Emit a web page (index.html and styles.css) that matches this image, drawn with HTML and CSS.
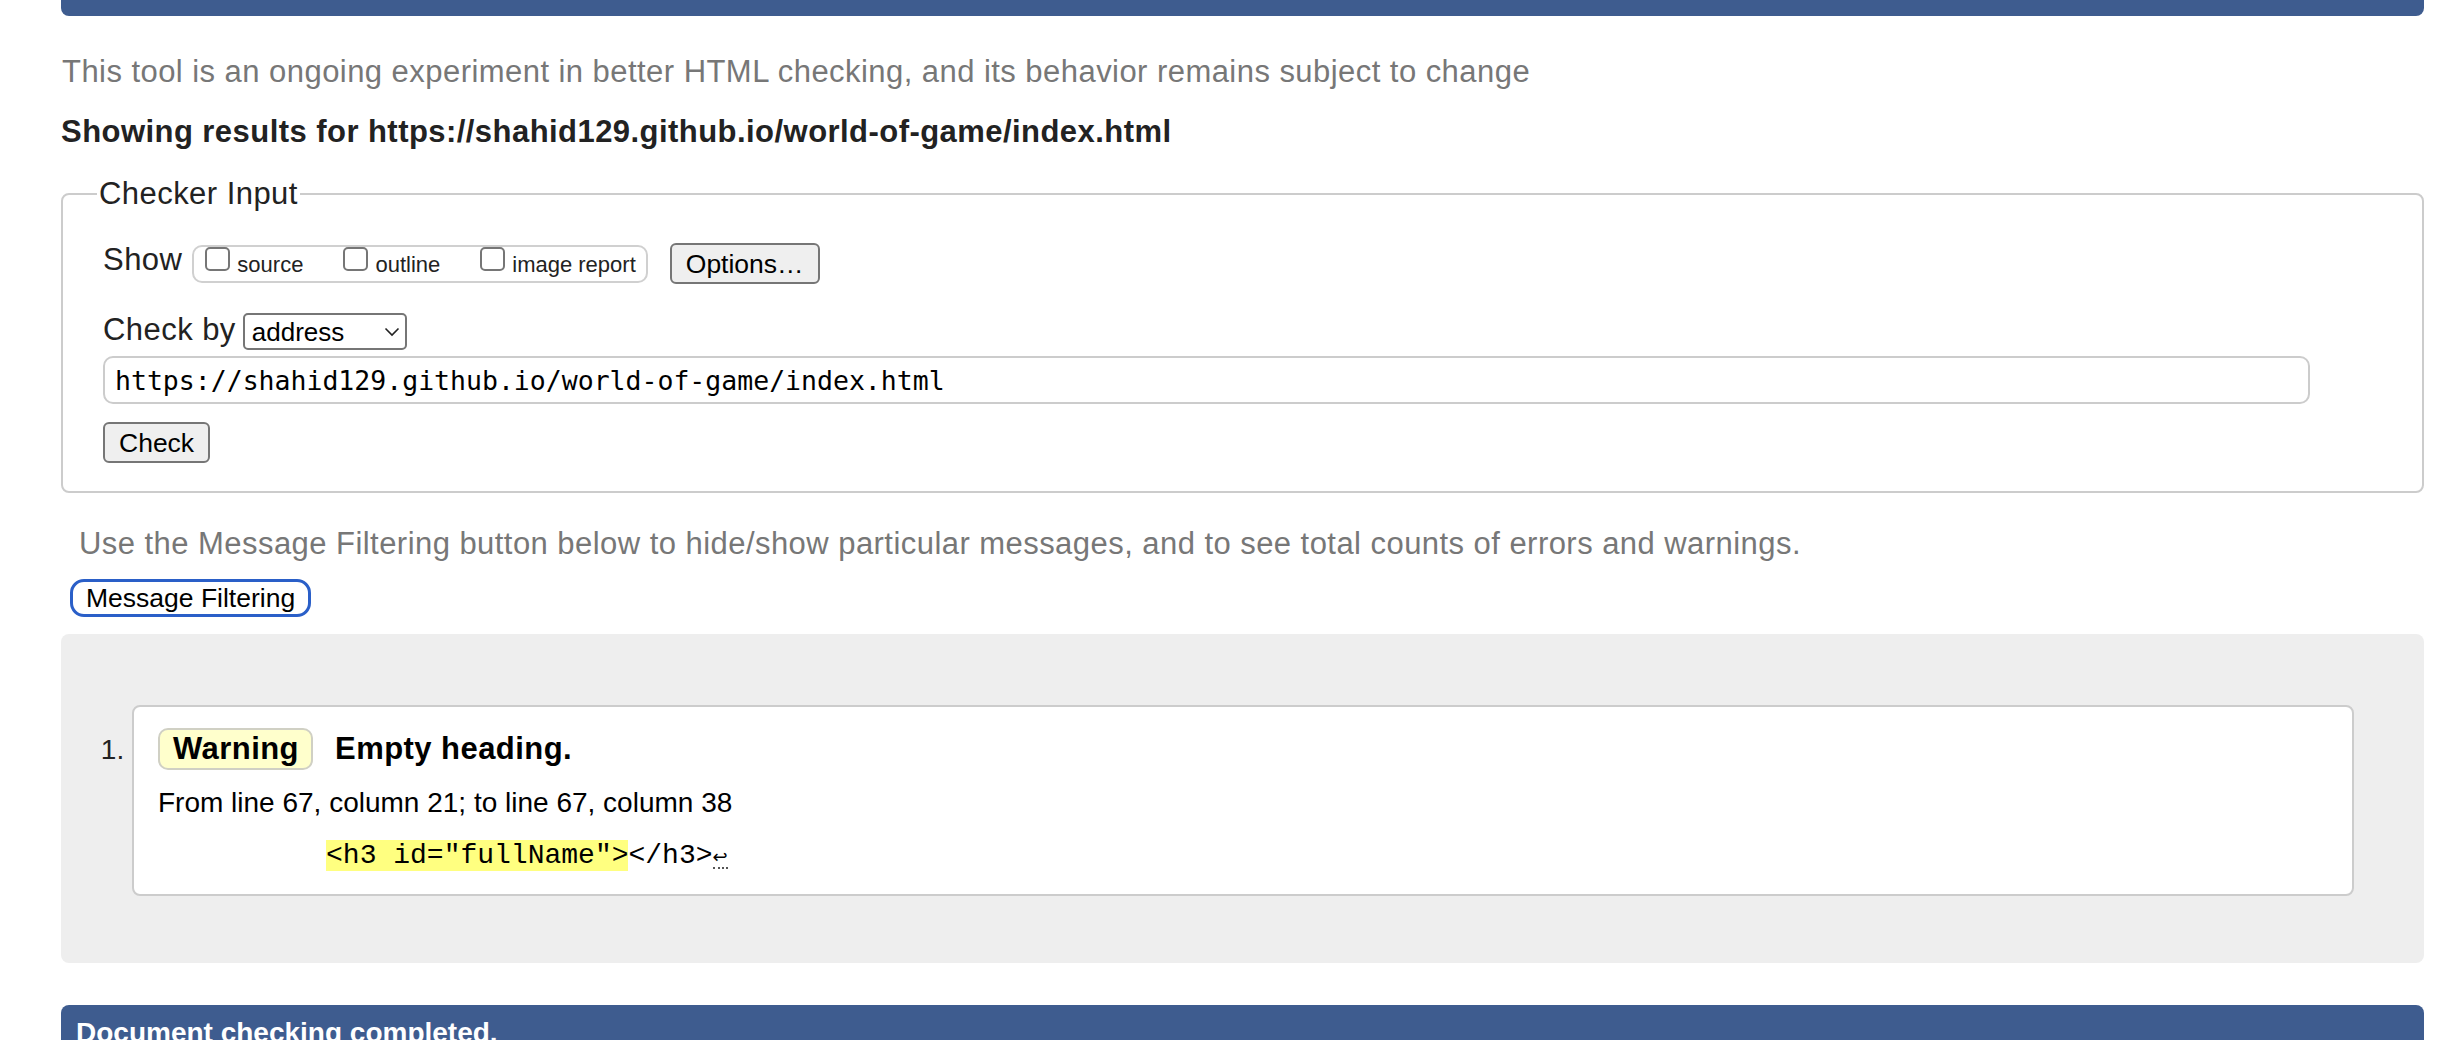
FILE: index.html
```html
<!DOCTYPE html>
<html lang="en">
<head>
<meta charset="utf-8">
<title>Nu Html Checker</title>
<link rel="stylesheet" href="styles.css">
</head>
<body>
<div class="page">
  <div class="topbar"></div>
  <p class="intro">This tool is an ongoing experiment in better HTML checking, and its behavior remains subject to change</p>
  <h2 class="results-for">Showing results for https://shahid129.github.io/world-of-game/index.html</h2>
  <form class="checker">
    <fieldset class="checker-input">
      <legend>Checker Input</legend>
      <div class="row row-show">
        <span class="label">Show</span>
        <span class="show-group">
          <label class="opt"><input type="checkbox"><span>source</span></label>
          <label class="opt"><input type="checkbox"><span>outline</span></label>
          <label class="opt"><input type="checkbox"><span>image report</span></label>
        </span>
        <button type="button" class="btn btn-options">Options…</button>
      </div>
      <div class="row row-by">
        <span class="label">Check by</span>
        <span class="select-wrap">
          <select class="select"><option>address</option></select>
          <svg class="chevron" width="16" height="10" viewBox="0 0 16 10"><path d="M1.5 1.5 L8 8 L14.5 1.5" fill="none" stroke="#222" stroke-width="1.6"/></svg>
        </span>
      </div>
      <input class="url" type="url" value="https://shahid129.github.io/world-of-game/index.html">
      <div class="row row-check"><button type="button" class="btn">Check</button></div>
    </fieldset>
  </form>
  <p class="filter-hint">Use the Message Filtering button below to hide/show particular messages, and to see total counts of errors and warnings.</p>
  <button type="button" class="filter-btn">Message Filtering</button>
  <div class="results">
    <ol class="messages">
      <li class="msg">
        <p class="msg-head"><span class="badge">Warning</span><span class="msg-text">Empty heading.</span></p>
        <p class="location">From line 67, column 21; to line 67, column 38</p>
        <p class="extract"><code>          <mark>&lt;h3 id="fullName"&gt;</mark>&lt;/h3&gt;<span class="lf">↩</span></code></p>
      </li>
    </ol>
  </div>
  <div class="footbar">Document checking completed.</div>
</div>
</body>
</html>
```
FILE: styles.css
```css
* { box-sizing: border-box; }
html, body { margin: 0; padding: 0; background: #fff; }
body {
  font-family: "Liberation Sans", Arial, sans-serif;
  color: #222;
  overflow: hidden;
  height: 1040px;
}
.page { margin: 0 24px 0 61px; }

.topbar {
  height: 16px;
  background: #3e5c8f;
  border-radius: 0 0 8px 8px;
}

.intro {
  margin: 39px 0 0 1px;
  font-size: 31px;
  letter-spacing: 0.45px;
  line-height: 34px;
  color: #777;
}

.results-for {
  margin: 26px 0 0 0;
  font-size: 31px;
  letter-spacing: 0.45px;
  line-height: 34px;
  font-weight: bold;
  color: #222;
}

.checker { margin: 28px 0 0 0; }

.checker-input {
  margin: 0;
  min-width: 0;
  border: 2px solid #cccccc;
  border-radius: 8px;
  padding: 32px 0 28px 40px;
}
.checker-input legend {
  margin-left: -6px;
  padding: 0 2px;
  font-size: 31px;
  letter-spacing: 0.45px;
  line-height: 34px;
  color: #222;
}

.row { display: flex; align-items: flex-start; }
.label { font-size: 31px; letter-spacing: 0.45px; line-height: 34px; color: #222; }

.show-group {
  display: flex;
  align-items: flex-start;
  gap: 40px;
  margin: 2px 0 0 10px;
  height: 38px;
  border: 2px solid #d0d0d0;
  border-radius: 10px;
  padding: 0 10px 0 11px;
}
.opt { display: flex; align-items: flex-start; gap: 7px; }
.opt input {
  appearance: none;
  -webkit-appearance: none;
  margin: 0;
  width: 25px;
  height: 24px;
  border: 2px solid #767676;
  border-radius: 5px;
  background: #fff;
}
.opt span {
  margin-top: 5px;
  font-size: 22px;
  line-height: 25px;
  color: #222;
}

.btn {
  height: 41px;
  padding: 0 14px;
  border: 2px solid #767676;
  border-radius: 6px;
  background: #efefef;
  font-family: "Liberation Sans", Arial, sans-serif;
  font-size: 26.5px;
  line-height: 30px;
  color: #000;
}
.btn-options { margin-left: 22px; }

.row-by { margin-top: 29px; }
.select-wrap { position: relative; display: block; margin-left: 7px; }
.select {
  appearance: none;
  -webkit-appearance: none;
  display: block;
  width: 164px;
  height: 37px;
  margin: 0;
  padding: 0 0 0 7px;
  border: 2px solid #767676;
  border-radius: 5px;
  background: #fff;
  font-family: "Liberation Sans", Arial, sans-serif;
  font-size: 26px;
  color: #000;
}
.chevron { position: absolute; right: 7px; top: 14px; pointer-events: none; }

.url {
  display: block;
  width: 2207px;
  height: 48px;
  margin: 6px 0 0 0;
  padding: 0 10px;
  border: 2px solid #cccccc;
  border-radius: 10px;
  font-family: "DejaVu Sans Mono", monospace;
  font-size: 26.5px;
  color: #000;
  background: #fff;
}

.row-check { margin-top: 18px; }

.filter-hint {
  margin: 34px 0 0 18px;
  font-size: 31px;
  letter-spacing: 0.45px;
  line-height: 34px;
  color: #777;
}

.filter-btn {
  display: block;
  margin: 18px 0 0 9px;
  height: 38px;
  padding: 0 13px;
  border: 3px solid #2a5fc8;
  border-radius: 14px;
  background: #fff;
  font-family: "Liberation Sans", Arial, sans-serif;
  font-size: 26.5px;
  line-height: 30px;
  color: #000;
}

.results {
  margin-top: 17px;
  background: #eeeeee;
  border-radius: 8px;
  padding: 71px 70px 67px 71px;
}
.messages { margin: 0; padding: 0; }
.msg {
  border: 2px solid #cccccc;
  border-radius: 8px;
  background: #fff;
  padding: 21px 24px 21px 24px;
  font-size: 28px;
  color: #222;
}
.msg p { margin: 0; }
.msg-head { display: flex; align-items: center; height: 42px; }
.badge {
  font-size: 31px;
  letter-spacing: 0.45px;
  line-height: 34px;
  font-weight: bold;
  color: #000;
  background: #ffffcc;
  border: 2px solid #d0d0c4;
  border-radius: 10px;
  padding: 2px 12px 2px 13px;
}
.msg-text {
  margin-left: 22px;
  font-size: 31px;
  letter-spacing: 0.45px;
  line-height: 34px;
  font-weight: bold;
  color: #000;
}
.msg .location {
  margin-top: 17px;
  font-size: 28px;
  line-height: 32px;
  color: #000;
}
.msg .extract {
  margin-top: 19px;
  font-size: 28px;
  line-height: 32px;
}
.extract code {
  font-family: "Liberation Mono", "Courier New", monospace;
  font-size: 28px;
  white-space: pre;
  color: #000;
}
.extract mark { background: #ffff80; color: #000; }
.lf {
  font-family: "DejaVu Sans", sans-serif;
  font-size: 18px;
  border-bottom: 2px dotted #555;
}

.footbar {
  margin-top: 42px;
  height: 80px;
  background: #3e5c8f;
  border-radius: 8px 8px 0 0;
  padding: 12px 15px;
  font-size: 28px;
  line-height: 32px;
  font-weight: bold;
  color: #fff;
}
```
